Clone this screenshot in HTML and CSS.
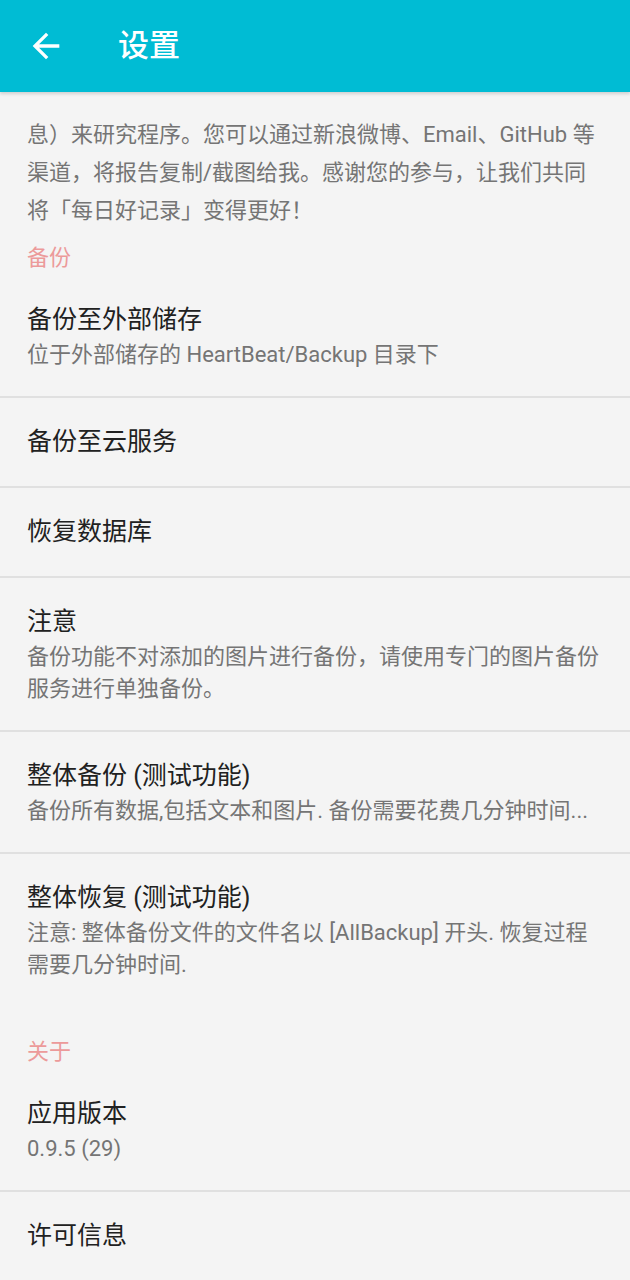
FILE: index.html
```html
<!DOCTYPE html>
<html lang="zh-CN">
<head>
<meta charset="utf-8">
<title>设置</title>
<link rel="stylesheet" href="styles.css">
</head>
<body>
<header class="appbar">
  <svg class="back" viewBox="0 0 24 24" width="40" height="40" aria-hidden="true">
    <path d="M20 11H7.83l5.59-5.59L12 4l-8 8 8 8 1.41-1.41L7.83 13H20v-2z" fill="#ffffff"/>
  </svg>
  <h1 class="title">设置</h1>
</header>
<main class="content">
  <p class="intro">息）来研究程序。您可以通过新浪微博、Email、GitHub 等<br>渠道，将报告复制/截图给我。感谢您的参与，让我们共同<br>将「每日好记录」变得更好！</p>

  <div class="category first">备份</div>
  <div class="pref">
    <div class="pref-title">备份至外部储存</div>
    <div class="pref-sub">位于外部储存的 HeartBeat/Backup 目录下</div>
  </div>
  <div class="pref">
    <div class="pref-title">备份至云服务</div>
  </div>
  <div class="pref">
    <div class="pref-title">恢复数据库</div>
  </div>
  <div class="pref">
    <div class="pref-title">注意</div>
    <div class="pref-sub">备份功能不对添加的图片进行备份，请使用专门的图片备份<br>服务进行单独备份。</div>
  </div>
  <div class="pref">
    <div class="pref-title">整体备份 (测试功能)</div>
    <div class="pref-sub">备份所有数据,包括文本和图片. 备份需要花费几分钟时间...</div>
  </div>
  <div class="pref last">
    <div class="pref-title">整体恢复 (测试功能)</div>
    <div class="pref-sub">注意: 整体备份文件的文件名以 [AllBackup] 开头. 恢复过程<br>需要几分钟时间.</div>
  </div>

  <div class="category">关于</div>
  <div class="pref">
    <div class="pref-title">应用版本</div>
    <div class="pref-sub">0.9.5 (29)</div>
  </div>
  <div class="pref last">
    <div class="pref-title">许可信息</div>
  </div>
</main>
</body>
</html>
```

FILE: styles.css
```css
html, body {
  margin: 0;
  padding: 0;
}
body {
  background: #f4f4f4;
  font-family: Roboto, "Noto Sans CJK SC", "Noto Sans", sans-serif;
  width: 630px;
  height: 1280px;
  overflow: hidden;
}
.appbar {
  height: 92px;
  background: #00bcd4;
  display: flex;
  align-items: center;
  box-shadow: 0 2px 3px rgba(0, 0, 0, 0.15);
  position: relative;
  z-index: 2;
}
.back {
  margin-left: 26px;
  width: 40px;
  height: 40px;
  flex: none;
}
.title {
  margin: 0 0 0 52px;
  font-size: 31px;
  font-weight: 500;
  color: #ffffff;
  line-height: 40px;
}
.content {
  display: flex;
  flex-direction: column;
}
.intro {
  margin: 0;
  padding: 24px 16px 0 27px;
  font-size: 22px;
  line-height: 38px;
  color: #757575;
  white-space: nowrap;
}
.category {
  padding: 30px 27px 2px;
  font-size: 22px;
  line-height: 32px;
  color: #ec9a9a;
}
.category.first {
  padding-top: 12px;
}
.pref {
  padding: 25px 16px 25px 27px;
  border-bottom: 2px solid #e0e0e0;
}
.pref.last {
  border-bottom: none;
}
.pref-title {
  font-size: 25px;
  line-height: 38px;
  color: #212121;
  white-space: nowrap;
}
.pref-sub {
  font-size: 22px;
  line-height: 32px;
  color: #757575;
  white-space: nowrap;
}
```
